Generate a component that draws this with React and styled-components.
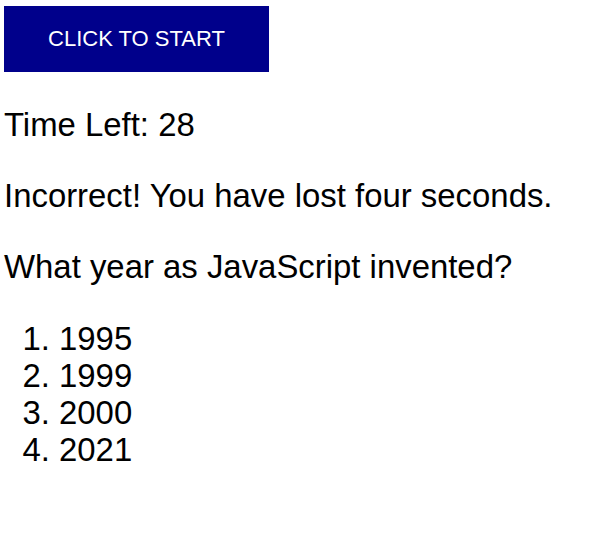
import React from "react";
import styled, { createGlobalStyle } from "styled-components";

const GlobalStyle = createGlobalStyle`
    body {
        margin: 0;
        background: #ffffff;
        font-family: "Liberation Sans", Arial, sans-serif;
        color: #000000;
    }
`;

const Page = styled.main`
    padding: 6px 4px;
`;

const StartButton = styled.button`
    display: block;
    width: 265px;
    height: 66px;
    margin: 0;
    padding: 0;
    border: none;
    border-radius: 0;
    background-color: #00008b;
    color: #ffffff;
    font-family: "Liberation Sans", Arial, sans-serif;
    font-size: 22px;
    cursor: pointer;
`;

const Text = styled.p`
    margin: 34px 0;
    font-size: 32.9px;
    line-height: 37.2px;
`;

const OptionList = styled.ol`
    margin: 34px 0;
    padding-left: 55px;
    font-size: 32.9px;
    line-height: 37.2px;
`;

const Option = styled.li`
    cursor: pointer;
`;

const choices = ["1995", "1999", "2000", "2021"];

export default function App() {
    return (
        <Page>
            <GlobalStyle />
            <StartButton type="button">CLICK TO START</StartButton>
            <Text>Time Left: 28</Text>
            <Text>Incorrect! You have lost four seconds.</Text>
            <Text>What year as JavaScript invented?</Text>
            <OptionList>
                {choices.map((choice) => (
                    <Option key={choice}>{choice}</Option>
                ))}
            </OptionList>
        </Page>
    );
}
